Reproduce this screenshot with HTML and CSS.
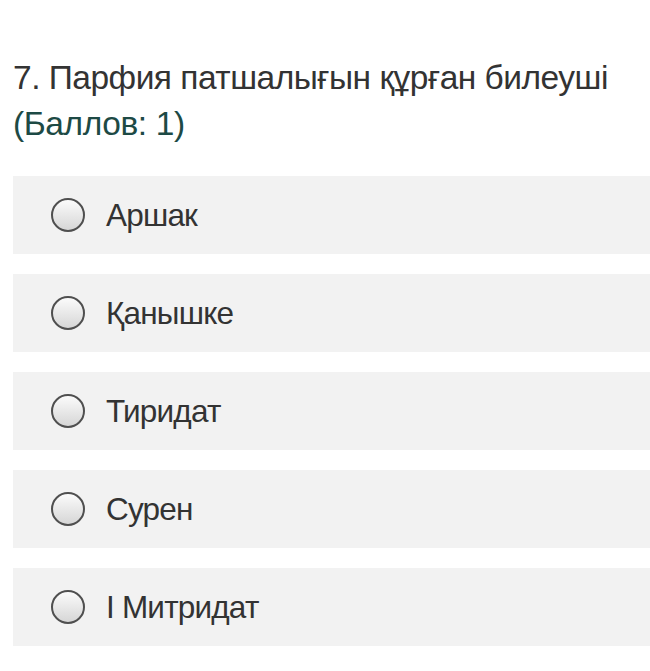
FILE: index.html
```html
<!DOCTYPE html>
<html>
<head>
<meta charset="utf-8">
<link rel="stylesheet" href="styles.css">
</head>
<body>
<div class="question">
  <div class="title">7. Парфия патшалығын құрған билеуші</div>
  <div class="points">(Баллов: 1)</div>
</div>
<div class="options">
  <label class="option"><span class="radio"></span><span class="text">Аршак</span></label>
  <label class="option"><span class="radio"></span><span class="text">Қанышке</span></label>
  <label class="option"><span class="radio"></span><span class="text">Тиридат</span></label>
  <label class="option"><span class="radio"></span><span class="text">Сурен</span></label>
  <label class="option"><span class="radio"></span><span class="text">I Митридат</span></label>
</div>
</body>
</html>
```
FILE: styles.css
```css
html, body { margin: 0; padding: 0; background: #fff; }
body {
  font-family: "Liberation Sans", Arial, sans-serif;
  color: #333;
  padding: 55px 0 0 13px;
}
.question { font-size: 33.5px; line-height: 46px; }
.title { color: #333; letter-spacing: -0.5px; }
.points { color: #1d4a45; letter-spacing: -0.4px; }
.options {
  margin-top: 29px;
  display: flex;
  flex-direction: column;
  gap: 20px;
}
.option {
  display: flex;
  align-items: center;
  height: 78px;
  background: #f2f2f2;
  padding-left: 38px;
}
.radio {
  width: 30px;
  height: 30px;
  border: 2px solid #4f4f4f;
  border-radius: 50%;
  background: linear-gradient(#fbfbfb, #d6d6d6);
  flex: none;
}
.text {
  margin-left: 21px;
  font-size: 31.5px;
  letter-spacing: -0.8px;
  color: #333;
}
```
